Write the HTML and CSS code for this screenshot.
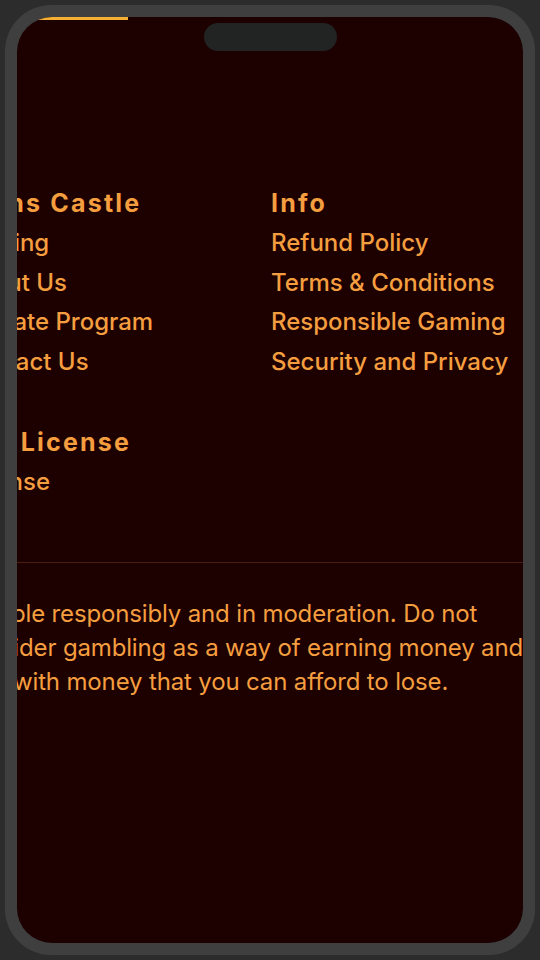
FILE: index.html
```html
<!DOCTYPE html>
<html lang="en">
<head>
    <meta charset="UTF-8">
    <meta name="viewport" content="width=device-width, initial-scale=1.0">
    <title>Coins Castle - Footer</title>
    <link rel="stylesheet" href="styles.css">
</head>
<body>
    <div class="phone">
        <div class="screen">
            <div class="progress"></div>
            <div class="notch"></div>

            <footer class="footer">
                <div class="footer-cols">
                    <div class="footer-col">
                        <h3>Coins Castle</h3>
                        <a href="#">Gaming</a>
                        <a href="#">About Us</a>
                        <a href="#">Affiliate Program</a>
                        <a href="#">Contact Us</a>
                    </div>
                    <div class="footer-col">
                        <h3>Info</h3>
                        <a href="#">Refund Policy</a>
                        <a href="#">Terms &amp; Conditions</a>
                        <a href="#">Responsible Gaming</a>
                        <a href="#">Security and Privacy</a>
                    </div>
                    <div class="footer-col">
                        <h3>Our License</h3>
                        <a href="#">License</a>
                    </div>
                </div>

                <hr class="divider">

                <p class="disclaimer">Gamble responsibly and in moderation. Do not consider gambling as a way of earning money and only with money that you can afford to lose.</p>
            </footer>
        </div>
    </div>
</body>
</html>
```

FILE: styles.css
```css
html, body {
    margin: 0;
    padding: 0;
}
body {
    background-color: #2c2c2c;
    padding: 5px;
    font-family: Inter, "DejaVu Sans", sans-serif;
}
.phone {
    width: 530px;
    height: 950px;
    box-sizing: border-box;
    padding: 12px;
    background-color: #3f3f3f;
    border-radius: 46px;
}
.screen {
    position: relative;
    height: 100%;
    overflow: hidden;
    border-radius: 35px;
    background-color: #1d0101;
}
.progress {
    position: absolute;
    top: 0;
    left: 0;
    width: 111px;
    height: 3px;
    background-color: #f5b033;
}
.notch {
    position: absolute;
    top: 6px;
    left: 187px;
    width: 133px;
    height: 28px;
    border-radius: 14px;
    background-color: #222423;
}
.footer {
    padding-top: 166px;
    color: #f59e3f;
}
.footer-cols {
    display: grid;
    grid-template-columns: 310px 1fr;
    row-gap: 41px;
    margin-left: -56px;
}
.footer-col h3 {
    margin: 0;
    font-size: 25px;
    line-height: 40px;
    font-weight: 700;
    letter-spacing: 2.2px;
}
.footer-col a {
    display: block;
    color: #f59e3f;
    text-decoration: none;
    font-size: 24px;
    font-weight: 500;
    line-height: 39.5px;
}
.divider {
    margin: 60px 0 0;
    border: none;
    border-top: 1px solid #4a1c12;
}
.disclaimer {
    margin: 34px -24px 0 -58px;
    font-size: 24px;
    line-height: 34px;
    letter-spacing: -0.15px;
}
```
